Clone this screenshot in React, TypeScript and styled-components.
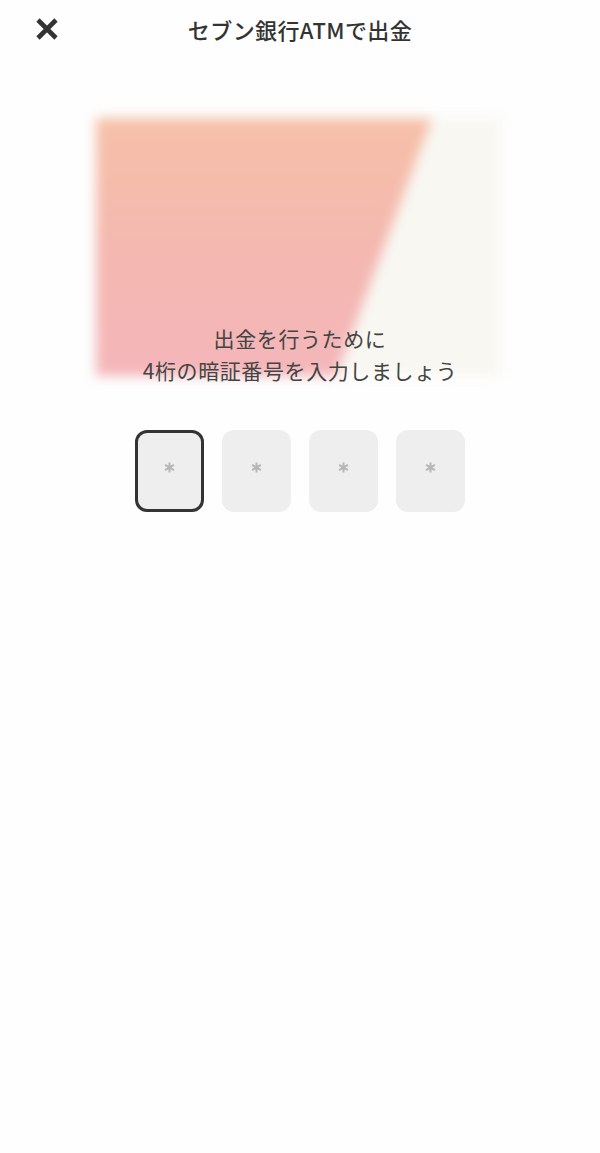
import React from "react"
import styled, { createGlobalStyle } from "styled-components"

const GlobalStyle = createGlobalStyle`
  html, body {
    margin: 0;
    padding: 0;
    background: #fefefe;
  }
  body {
    font-family: "Noto Sans CJK JP", "Noto Sans", sans-serif;
    color: #333;
  }
`

const Screen = styled.div`
  width: 600px;
  height: 1153px;
  overflow: hidden;
  display: flex;
  flex-direction: column;
`

const Header = styled.header`
  height: 58px;
  display: grid;
  grid-template-columns: 1fr auto 1fr;
  align-items: center;
  padding: 0 34px;
  flex-shrink: 0;
`

const CloseButton = styled.button`
  width: 26px;
  height: 26px;
  padding: 0;
  border: 0;
  background: none;
  color: #333;
  display: flex;
  align-items: center;
  justify-content: center;
`

const Title = styled.h1`
  margin: 0;
  font-size: 22px;
  line-height: 30px;
  font-weight: 500;
  color: #333;
  letter-spacing: 0.4px;
`

const Hero = styled.div`
  height: 332px;
  padding: 60px 100px 0 96px;
  box-sizing: border-box;
  flex-shrink: 0;
`

const Card = styled.div`
  position: relative;
  width: 404px;
  height: 258px;
  background: #f8f7f1;
  filter: blur(6px);
  overflow: hidden;
`

const CardBand = styled.div`
  position: absolute;
  inset: 0;
  background: linear-gradient(180deg, #f6c0a8 0%, #f4b8b0 50%, #f4b6ba 100%);
  clip-path: polygon(0 0, 336px 0, 240px 100%, 0 100%);
`

const Caption = styled.p`
  position: relative;
  margin: -68px 0 0;
  text-align: center;
  font-size: 21px;
  line-height: 32px;
  letter-spacing: 0.6px;
  color: #444;
`

const PinRow = styled.div`
  margin-top: 44px;
  display: flex;
  justify-content: center;
  gap: 18px;
`

const PinBox = styled.div<{ $active?: boolean }>`
  width: 69px;
  height: 82px;
  box-sizing: border-box;
  border-radius: 12px;
  background: #eeeeee;
  border: 3px solid ${(p) => (p.$active ? "#333" : "#eeeeee")};
  display: flex;
  align-items: center;
  justify-content: center;
  padding-bottom: 8px;
`

const PinMark = styled.svg`
  width: 11px;
  height: 11px;
  color: #b6b6b6;
`

const Asterisk = () => (
  <PinMark viewBox="0 0 12 12" fill="none" stroke="currentColor" strokeWidth="2.2">
    <path d="M6 0.5v11M1.2 3.2l9.6 5.6M10.8 3.2l-9.6 5.6" />
  </PinMark>
)

const App = () => {
  return (
    <>
      <GlobalStyle />
      <Screen>
        <Header>
          <CloseButton aria-label="閉じる">
            <svg width="24" height="24" viewBox="0 0 24 24" fill="none">
              <path d="M3 3l18 18M21 3L3 21" stroke="currentColor" strokeWidth="4.6" />
            </svg>
          </CloseButton>
          <Title>セブン銀行ATMで出金</Title>
        </Header>
        <Hero>
          <Card>
            <CardBand />
          </Card>
        </Hero>
        <Caption>
          出金を行うために
          <br />
          4桁の暗証番号を入力しましょう
        </Caption>
        <PinRow>
          {[0, 1, 2, 3].map((i) => (
            <PinBox key={i} $active={i === 0}>
              <Asterisk />
            </PinBox>
          ))}
        </PinRow>
      </Screen>
    </>
  )
}

export default App
